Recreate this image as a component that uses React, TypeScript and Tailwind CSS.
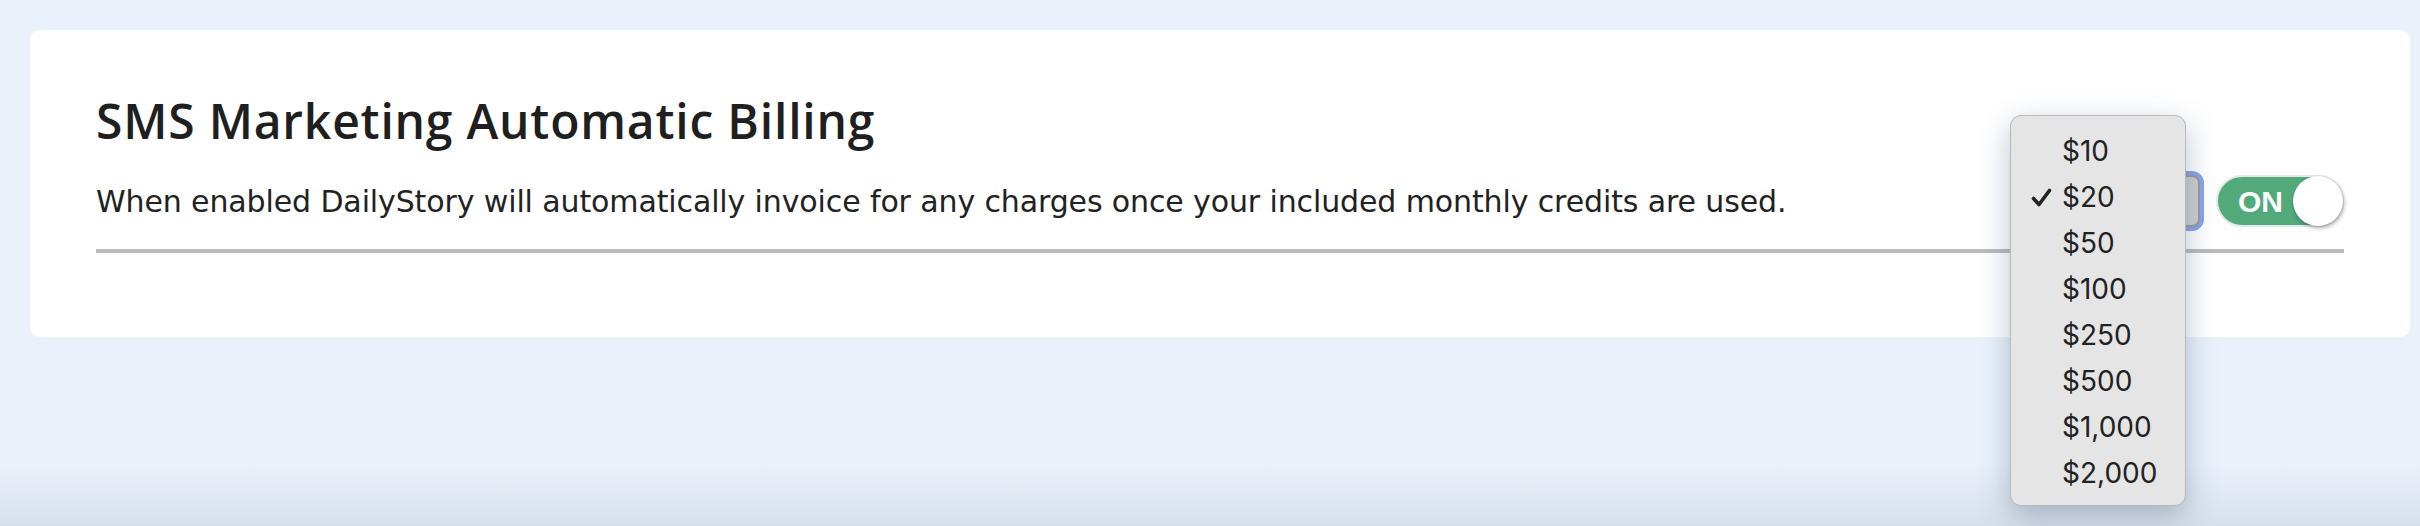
import React from 'react';

const amounts = ['$10', '$20', '$50', '$100', '$250', '$500', '$1,000', '$2,000'];

const AmountMenu: React.FC = () => {
  return (
    <div className="absolute left-[-27px] top-[-60px] w-[176px] rounded-[11px] border border-[#b9b9b9] bg-[#e5e5e5] pt-[12px] pb-[9px] shadow-[0_10px_30px_rgba(60,80,110,0.35)] z-10">
      {amounts.map((a) => (
        <div key={a} className="relative h-[46px] flex items-center pl-[51px] text-[28px] text-[#222] font-['Inter','Liberation_Sans',sans-serif]">
          {a === '$20' && (
            <svg className="absolute left-[20px] top-[14px]" width="21" height="19" viewBox="0 0 21 19">
              <path d="M2.5 10.5 L8 16.5 L18.5 2.5" fill="none" stroke="#222" strokeWidth="3.6" strokeLinecap="round" strokeLinejoin="round" />
            </svg>
          )}
          {a}
        </div>
      ))}
    </div>
  );
};

const App: React.FC = () => {
  return (
    <div className="h-[526px] w-full bg-[linear-gradient(to_bottom,#eaf1fb_0%,#eaf1fb_88%,#d7dfea_100%)] pt-[30px] pl-[30px]">
      <div className="w-[2380px] h-[307px] rounded-[10px] bg-white px-[66px] pt-[57px]">
        <h1 className="text-[48px] leading-[1.4] font-semibold text-[#1f1f1f] font-['Open_Sans',sans-serif] tracking-[0.8px]">
          SMS Marketing Automatic Billing
        </h1>
        <div className="flex items-center justify-between mt-[21px] pb-[22px] border-b-4 border-[#bbbbbb]">
          <p className="text-[30px] text-[#222] font-['DejaVu_Sans',sans-serif] tracking-[-0.12px]">
            When enabled DailyStory will automatically invoice for any charges once your included monthly credits are used.
          </p>
          <div className="flex items-center gap-[16px]">
            <div className="relative">
              <div className="w-[163px] h-[52px] rounded-[8px] border-2 border-[#9a9a9a] bg-[#cfcfcf] ring-[4px] ring-[#87a6ea]" />
              <AmountMenu />
            </div>
            <button className="relative w-[128px] h-[52px] rounded-full bg-[#52aa7b] border-[2px] border-[#e3e9e6] flex items-center">
              <span className="pl-[20px] text-[30px] font-bold text-white font-['Liberation_Sans',sans-serif]">ON</span>
              <span className="absolute right-[-1px] top-[-1px] w-[50px] h-[50px] rounded-full bg-white shadow-[1px_2px_4px_rgba(0,0,0,0.35)]" />
            </button>
          </div>
        </div>
      </div>
    </div>
  );
};

export default App;
